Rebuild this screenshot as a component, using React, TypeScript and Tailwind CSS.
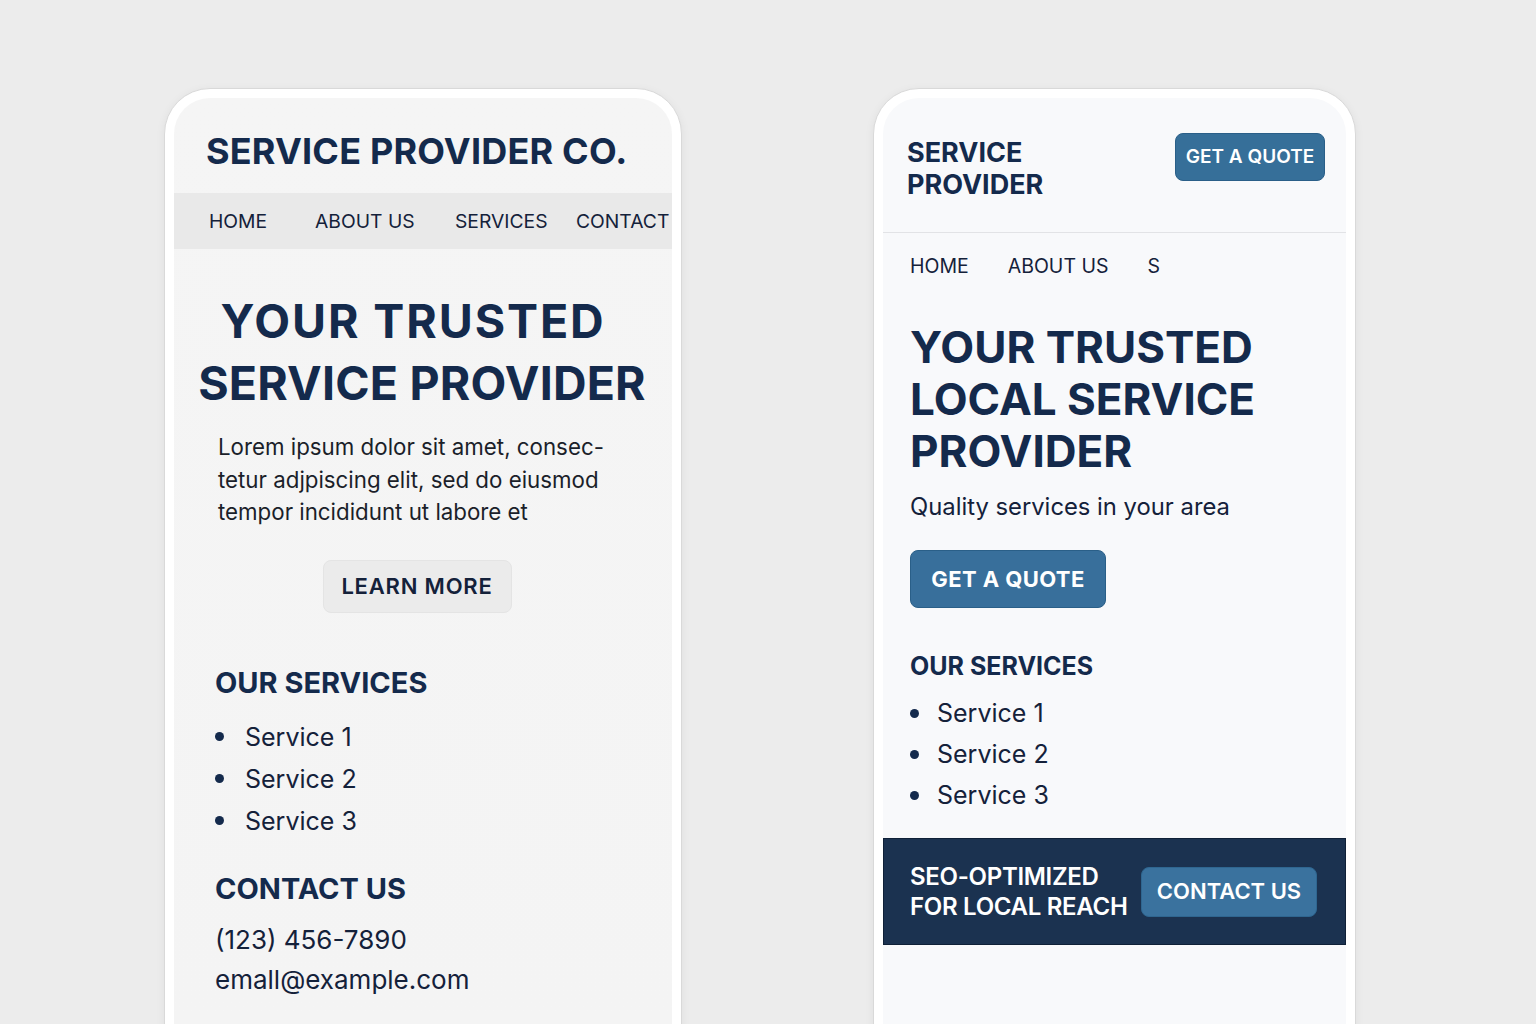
import React from 'react';

const font = { fontFamily: 'Inter, "Noto Sans", sans-serif' };

function Bullet({ label, size }: { label: string; size: 'lg' | 'md' }) {
  return (
    <li className={size === 'lg' ? 'flex items-center gap-[21px]' : 'flex items-center gap-[18px]'}>
      <span className="w-[9px] h-[9px] rounded-full bg-[#142a4c] shrink-0" />
      <span>{label}</span>
    </li>
  );
}

function Phone({ width, screen, children }: { width: string; screen: string; children: React.ReactNode }) {
  return (
    <div className={`${width} h-[960px] shrink-0 rounded-t-[46px] bg-white border border-[#d9d9d9] p-[9px] pb-0 shadow-[0_2px_10px_rgba(0,0,0,0.06)]`}>
      <div className={`h-full rounded-t-[36px] overflow-hidden ${screen}`}>{children}</div>
    </div>
  );
}

function LeftPhone() {
  return (
    <Phone width="w-[518px]" screen="bg-gradient-to-b from-[#f5f5f5] to-[#f4f4f4]">
      <header className="pt-[31px] pb-[20px] pl-[32px]">
        <h1 className="text-[36px] leading-[44px] font-bold text-[#142a4c] tracking-[0.2px]">SERVICE PROVIDER CO.</h1>
      </header>
      <nav className="h-[56px] bg-[#e9e9e9] flex items-center pl-[35px] text-[19.3px] text-[#14213a] whitespace-nowrap">
        <span className="w-[106px]">HOME</span>
        <span className="w-[140px]">ABOUT US</span>
        <span className="w-[121px]">SERVICES</span>
        <span>CONTACT</span>
      </nav>
      <section className="pt-[41px] pl-[20px] pr-[38px] flex flex-col items-center">
        <h2 className="text-[46.5px] leading-[62px] font-bold text-[#142a4c] text-center whitespace-nowrap tracking-[0.2px]">
          <span className="block tracking-[1.9px] pr-[2px]">YOUR TRUSTED</span>
          <span className="block pl-[16px]">SERVICE PROVIDER</span>
        </h2>
        <p className="mt-[17px] self-start pl-[24px] text-[22.3px] leading-[32.5px] text-[#1b1f2a] whitespace-nowrap">
          Lorem ipsum dolor sit amet, consec-
          <br />
          tetur adjpiscing elit, sed do eiusmod
          <br />
          tempor incididunt ut labore et
        </p>
        <button className="mt-[31px] ml-[6px] w-[189px] h-[53px] rounded-lg bg-[#ebebeb] border border-[#e4e4e4] text-[22px] font-semibold tracking-[0.8px] text-[#14213a]">
          LEARN MORE
        </button>
      </section>
      <section className="pl-[41px] pt-[52px]">
        <h3 className="text-[29px] leading-[36px] font-bold text-[#142a4c]">OUR SERVICES</h3>
        <ul className="mt-[15px] text-[25px] leading-[42px] text-[#14213a]">
          <Bullet label="Service 1" size="lg" />
          <Bullet label="Service 2" size="lg" />
          <Bullet label="Service 3" size="lg" />
        </ul>
        <h3 className="mt-[29px] text-[29px] leading-[36px] font-bold text-[#142a4c]">CONTACT US</h3>
        <div className="mt-[13px] text-[26px] leading-[40px] text-[#14213a]">
          <p>(123) 456-7890</p>
          <p>emall@example.com</p>
        </div>
      </section>
    </Phone>
  );
}

function RightPhone() {
  return (
    <Phone width="w-[483px]" screen="bg-[#f8f9fb]">
      <header className="flex items-start justify-between pt-[35px] pb-[31px] pl-[24px] pr-[21px] border-b border-[#e2e3e6]">
        <h1 className="mt-[4px] text-[27px] leading-[32px] font-bold text-[#142a4c]">
          SERVICE
          <br />
          PROVIDER
        </h1>
        <button className="w-[150px] h-[48px] rounded-lg bg-[#366f99] border border-[#2a5f88] text-white text-[19px] font-semibold">
          GET A QUOTE
        </button>
      </header>
      <nav className="pt-[21px] pl-[27px] flex gap-[39px] text-[19.5px] leading-[24px] text-[#14213a] whitespace-nowrap">
        <span>HOME</span>
        <span>ABOUT US</span>
        <span>S</span>
      </nav>
      <section className="pl-[27px] pt-[43px]">
        <h2 className="text-[44px] leading-[52px] font-bold text-[#142a4c] whitespace-nowrap">
          YOUR TRUSTED
          <br />
          LOCAL SERVICE
          <br />
          PROVIDER
        </h2>
        <p className="mt-[15px] text-[23.8px] leading-[30px] text-[#14213a]">Quality services in your area</p>
        <button className="mt-[28px] w-[196px] h-[58px] rounded-lg bg-[#386f9b] border border-[#2a5f88] text-white text-[22px] font-bold tracking-[0.4px]">
          GET A QUOTE
        </button>
        <h3 className="mt-[42px] text-[25px] leading-[32px] font-bold text-[#142a4c]">OUR SERVICES</h3>
        <ul className="mt-[11px] text-[25px] leading-[41px] text-[#14213a]">
          <Bullet label="Service 1" size="md" />
          <Bullet label="Service 2" size="md" />
          <Bullet label="Service 3" size="md" />
        </ul>
      </section>
      <div className="mt-[22px] h-[107px] bg-[#1b3250] border border-[#0f2037] flex items-center justify-between pl-[26px] pr-[28px]">
        <p className="text-[24px] leading-[30px] font-semibold text-white tracking-[-0.3px]">
          SEO-OPTIMIZED
          <br />
          FOR LOCAL REACH
        </p>
        <button className="w-[176px] h-[50px] rounded-lg bg-[#3a729e] border border-[#2f6690] text-white text-[22px] font-semibold">
          CONTACT US
        </button>
      </div>
    </Phone>
  );
}

export default function App() {
  return (
    <div className="w-[1536px] h-[1024px] overflow-hidden bg-[#ececec] flex items-start gap-[191px] pl-[164px] pt-[88px]" style={font}>
      <LeftPhone />
      <RightPhone />
    </div>
  );
}
